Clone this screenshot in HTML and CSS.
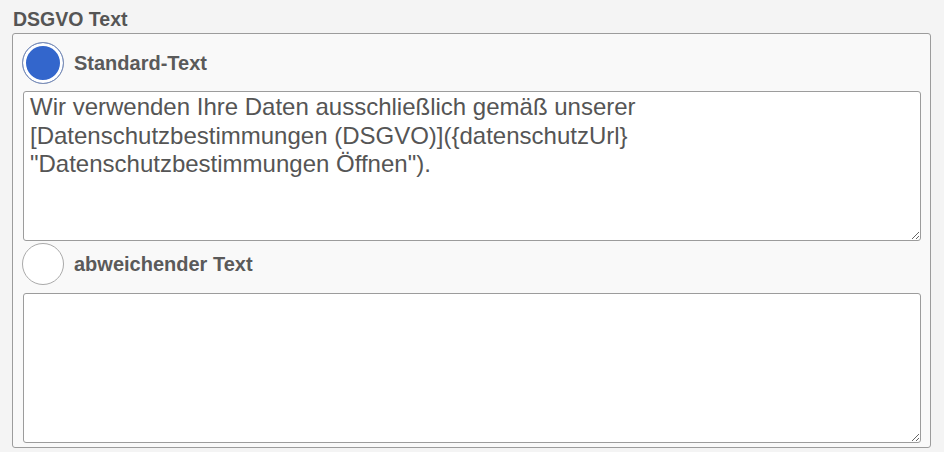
FILE: index.html
```html
<!DOCTYPE html>
<html lang="de">
<head>
<meta charset="utf-8">
<title>DSGVO Text</title>
<link rel="stylesheet" href="styles.css">
</head>
<body>
<div class="field">
  <div class="field-title">DSGVO Text</div>
  <div class="box">
    <label class="option">
      <input class="radio" type="radio" name="dsgvo" checked>
      <span class="option-label">Standard-Text</span>
    </label>
    <textarea class="text">Wir verwenden Ihre Daten ausschließlich gemäß unserer [Datenschutzbestimmungen (DSGVO)]({datenschutzUrl} "Datenschutzbestimmungen Öffnen").</textarea>
    <label class="option option-second">
      <input class="radio" type="radio" name="dsgvo">
      <span class="option-label">abweichender Text</span>
    </label>
    <textarea class="text"></textarea>
  </div>
</div>
</body>
</html>
```
FILE: styles.css
```css
html, body {
  margin: 0;
  padding: 0;
  background: #f4f4f4;
  font-family: "Liberation Sans", Arial, sans-serif;
}

.field {
  padding: 9px 13px 0 12px;
}

.field-title {
  font-size: 19.5px;
  font-weight: bold;
  color: #555;
  line-height: 20px;
  margin-bottom: 4px;
  padding-left: 1px;
}

.box {
  background: #f9f9f9;
  border: 1px solid #9c9c9c;
  border-radius: 3px;
  padding: 7px 9px 4px 9px;
  display: flex;
  flex-direction: column;
}

.option {
  display: flex;
  align-items: center;
  gap: 10px;
  height: 43px;
}

.option-second {
  margin-top: 1px;
}

.radio {
  appearance: none;
  -webkit-appearance: none;
  margin: 0;
  width: 42px;
  height: 42px;
  border-radius: 50%;
  border: 1px solid #aaa;
  background: #fff;
  box-sizing: border-box;
}

.radio:checked {
  border-color: #7f8fb3;
  background: #3366cc;
  box-shadow: inset 0 0 0 3px #fff;
}

.option-label {
  font-size: 20px;
  font-weight: bold;
  color: #5a5a5a;
  padding-top: 2px;
}

.text {
  display: block;
  box-sizing: border-box;
  width: calc(100% - 1px);
  height: 150px;
  margin: 7px 0 0 1px;
  border: 1px solid #9c9c9c;
  border-radius: 3px;
  background: #fff;
  padding: 1px 6px;
  font-family: "Liberation Sans", Arial, sans-serif;
  font-size: 24px;
  line-height: 28.5px;
  color: #555;
  resize: vertical;
}

.option-second + .text {
  margin-top: 8px;
}
```
